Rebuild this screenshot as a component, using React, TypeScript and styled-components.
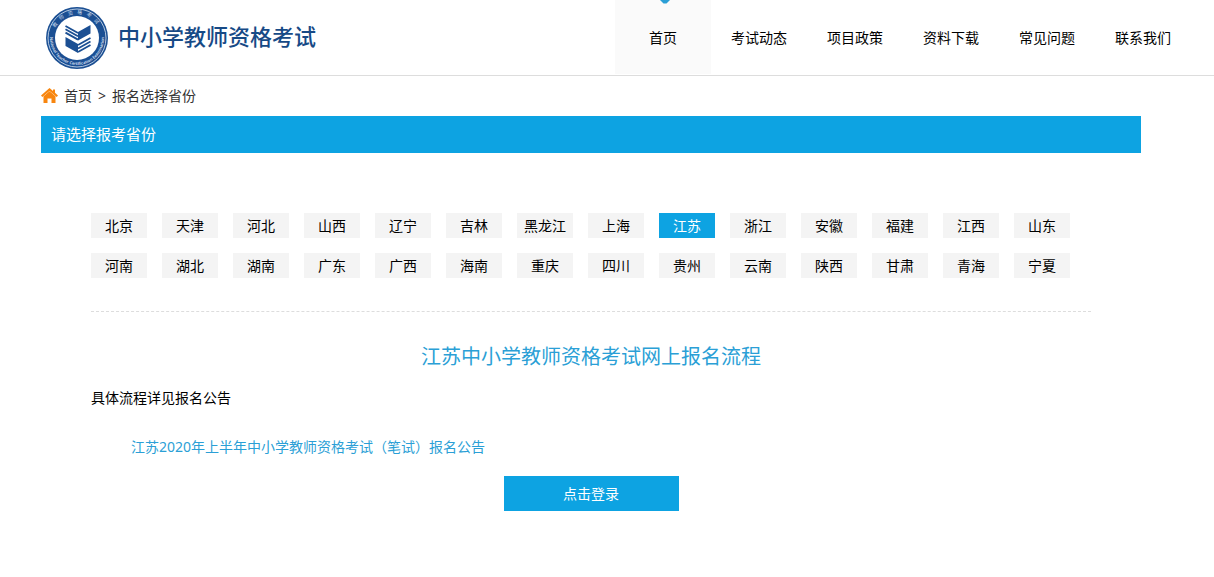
import React, { useState } from "react";
import styled, { createGlobalStyle } from "styled-components";

const BLUE = "#0da3e2";
const NAVY = "#1b4f93";

const GlobalStyle = createGlobalStyle`
  * { box-sizing: border-box; }
  body {
    margin: 0;
    background: #fff;
    color: #000;
    font: 14px/20px "Noto Sans", "Noto Sans CJK SC", sans-serif;
  }
  a { color: inherit; text-decoration: none; }
  h1, h2, p, ul, ol { margin: 0; padding: 0; font-weight: 400; }
  ul, ol { list-style: none; }
`;

const Header = styled.header`
  display: flex;
  justify-content: space-between;
  height: 76px;
  padding: 0 23px 0 45px;
  border-bottom: 1px solid #ddd;
`;

const Brand = styled.a`
  display: flex;
  align-items: center;
  gap: 9px;
  white-space: nowrap;
`;

const BrandName = styled.span`
  padding-bottom: 4px;
  color: #174a86;
  font-size: 22px;
  line-height: 32px;
  font-weight: 500;
`;

const NavList = styled.ul`
  display: flex;
`;

const NavLink = styled.a<{ $active?: boolean }>`
  position: relative;
  display: block;
  width: 96px;
  height: 74px;
  padding-top: 28px;
  text-align: center;
  white-space: nowrap;
  background: ${(p) => (p.$active ? "#fafafa" : "transparent")};
`;

const Marker = styled.svg`
  position: absolute;
  top: 0;
  left: 44px;
`;

const Main = styled.main`
  padding: 0 73px 66px 41px;
`;

const Breadcrumb = styled.nav`
  display: flex;
  align-items: center;
  gap: 6px;
  height: 40px;
  color: #333;
`;

const SectionTitle = styled.h1`
  height: 37px;
  padding: 0 10px;
  background: ${BLUE};
  color: #fff;
  font-size: 15px;
  line-height: 37px;
`;

const Content = styled.div`
  padding: 60px 50px 0;
`;

const Provinces = styled.ul`
  display: flex;
  flex-wrap: wrap;
  gap: 15px;
  padding-bottom: 33px;
  border-bottom: 1px dashed #ddd;
`;

const Province = styled.button<{ $selected: boolean }>`
  display: block;
  width: 56px;
  height: 25px;
  padding: 0;
  border: 0;
  background: ${(p) => (p.$selected ? BLUE : "#f4f4f4")};
  color: ${(p) => (p.$selected ? "#fff" : "#000")};
  font: inherit;
  cursor: pointer;
`;

const Process = styled.section`
  display: flex;
  flex-direction: column;
  padding-top: 30px;
`;

const ProcessTitle = styled.h2`
  color: #2b9fd6;
  font-size: 20px;
  line-height: 30px;
  text-align: center;
`;

const Note = styled.p`
  padding-top: 16px;
`;

const Notice = styled.a`
  align-self: flex-start;
  margin: 29px 40px 19px;
  color: #2b9fd6;
`;

const Login = styled.button`
  align-self: center;
  width: 175px;
  height: 35px;
  border: 0;
  background: ${BLUE};
  color: #fff;
  font: inherit;
  cursor: pointer;
`;

const Emblem = () => (
  <svg width="64" height="64" viewBox="0 0 64 64" aria-hidden="true">
    <defs>
      <path id="arc-top" d="M8 32a24 24 0 0 1 48 0" />
      <path id="arc-bottom" d="M5 32a27 27 0 0 0 54 0" />
    </defs>
    <circle cx="32" cy="32" r="31" fill={NAVY} />
    <circle cx="32" cy="32" r="29" fill="none" stroke="#b4c8e0" strokeWidth="1" />
    <circle cx="32" cy="32" r="22" fill="#fff" />
    <g fill="#c9d8ea">
      <text fontSize="5" textAnchor="middle" letterSpacing="4">
        <textPath href="#arc-top" startOffset="50%">教师资格考试</textPath>
      </text>
      <text fontSize="4" fontWeight="700" textAnchor="middle">
        <textPath href="#arc-bottom" startOffset="50%">National Teacher Certification Examination</textPath>
      </text>
    </g>
    <path d="M33 26l12.500-7v8.500L33 34.500z" fill={NAVY} />
    <path d="M20.500 31L33 38v9l-12.500-7z" fill={NAVY} />
    <g fill="none" stroke={NAVY} strokeWidth="1.800">
      <path d="M20.500 20L33 27M20.500 23.300L33 30.300M20.500 26.600L33 33.600" />
      <path d="M33 39l12.500-7M33 42.500l12.500-7M33 46l12.500-7" />
    </g>
  </svg>
);

const HomeIcon = () => (
  <svg width="17" height="16" viewBox="0 0 17 16" fill="#f8860f" aria-hidden="true">
    <path d="M8.500 0L0 7.500l1.300 1.500L8.500 3l7.200 6L17 7.500l-3-2.700V1.500h-2v1.600z" />
    <path d="M8.500 3.200L2.500 8.200V15h4v-4.500h4V15h4V8.200z" />
  </svg>
);

const navItems = ["首页", "考试动态", "项目政策", "资料下载", "常见问题", "联系我们"];

const provinces = [
  "北京", "天津", "河北", "山西", "辽宁", "吉林", "黑龙江",
  "上海", "江苏", "浙江", "安徽", "福建", "江西", "山东",
  "河南", "湖北", "湖南", "广东", "广西", "海南", "重庆",
  "四川", "贵州", "云南", "陕西", "甘肃", "青海", "宁夏",
];

export default function App() {
  const [selected, setSelected] = useState("江苏");
  return (
    <>
      <GlobalStyle />
      <Header>
        <Brand href="#">
          <Emblem />
          <BrandName>中小学教师资格考试</BrandName>
        </Brand>
        <nav>
          <NavList>
            {navItems.map((item, i) => (
              <li key={item}>
                <NavLink href="#" $active={i === 0}>
                  {i === 0 && (
                    <Marker width="12" height="4" viewBox="0 0 12 4" aria-hidden="true">
                      <path d="M1 0h10L7.500 3.500h-3z" fill="#2b9fd6" />
                    </Marker>
                  )}
                  {item}
                </NavLink>
              </li>
            ))}
          </NavList>
        </nav>
      </Header>
      <Main>
        <Breadcrumb>
          <HomeIcon />
          <a href="#">首页</a>
          <span>&gt;</span>
          <span>报名选择省份</span>
        </Breadcrumb>
        <SectionTitle>请选择报考省份</SectionTitle>
        <Content>
          <Provinces>
            {provinces.map((name) => (
              <li key={name}>
                <Province
                  type="button"
                  $selected={name === selected}
                  aria-pressed={name === selected}
                  onClick={() => setSelected(name)}
                >
                  {name}
                </Province>
              </li>
            ))}
          </Provinces>
          <Process>
            <ProcessTitle>{selected}中小学教师资格考试网上报名流程</ProcessTitle>
            <Note>具体流程详见报名公告</Note>
            <Notice href="#">{selected}2020年上半年中小学教师资格考试（笔试）报名公告</Notice>
            <Login type="button">点击登录</Login>
          </Process>
        </Content>
      </Main>
    </>
  );
}
